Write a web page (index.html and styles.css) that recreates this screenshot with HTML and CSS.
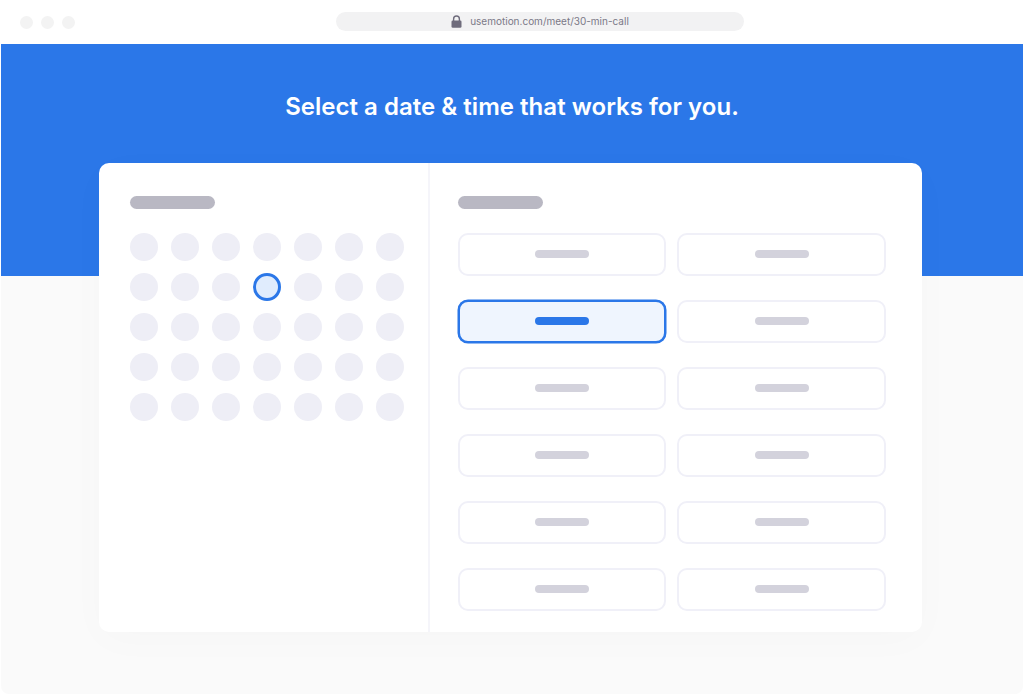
FILE: index.html
```html
<!DOCTYPE html>
<html lang="en">
<head>
<meta charset="utf-8">
<title>Select a date &amp; time</title>
<link rel="stylesheet" href="styles.css">
</head>
<body>
<div class="window">
  <header class="toolbar">
    <div class="lights"><span class="light"></span><span class="light"></span><span class="light"></span></div>
    <div class="address">
      <svg class="lock" width="11" height="13" viewBox="0 0 11 13" aria-hidden="true"><path d="M2.6 6V3.9a2.9 2.9 0 0 1 5.8 0V6" fill="none" stroke="#6f6c7c" stroke-width="1.4"/><rect x="0.5" y="5.4" width="10" height="7.4" rx="1.3" fill="#6f6c7c"/></svg>
      <span class="url">usemotion.com/meet/30-min-call</span>
    </div>
  </header>
  <main class="stage">
    <h1 class="title">Select a date &amp; time that works for you.</h1>
    <section class="card">
      <div class="calendar">
        <div class="heading-bar"></div>
        <div class="dots">
          <span class="dot"></span><span class="dot"></span><span class="dot"></span><span class="dot"></span><span class="dot"></span><span class="dot"></span><span class="dot"></span>
          <span class="dot"></span><span class="dot"></span><span class="dot"></span><span class="dot dot-active"></span><span class="dot"></span><span class="dot"></span><span class="dot"></span>
          <span class="dot"></span><span class="dot"></span><span class="dot"></span><span class="dot"></span><span class="dot"></span><span class="dot"></span><span class="dot"></span>
          <span class="dot"></span><span class="dot"></span><span class="dot"></span><span class="dot"></span><span class="dot"></span><span class="dot"></span><span class="dot"></span>
          <span class="dot"></span><span class="dot"></span><span class="dot"></span><span class="dot"></span><span class="dot"></span><span class="dot"></span><span class="dot"></span>
        </div>
      </div>
      <div class="times">
        <div class="heading-bar"></div>
        <div class="slots">
          <div class="slot"><span class="slot-bar"></span></div><div class="slot"><span class="slot-bar"></span></div>
          <div class="slot slot-active"><span class="slot-bar"></span></div><div class="slot"><span class="slot-bar"></span></div>
          <div class="slot"><span class="slot-bar"></span></div><div class="slot"><span class="slot-bar"></span></div>
          <div class="slot"><span class="slot-bar"></span></div><div class="slot"><span class="slot-bar"></span></div>
          <div class="slot"><span class="slot-bar"></span></div><div class="slot"><span class="slot-bar"></span></div>
          <div class="slot"><span class="slot-bar"></span></div><div class="slot"><span class="slot-bar"></span></div>
        </div>
      </div>
    </section>
  </main>
</div>
</body>
</html>
```
FILE: styles.css
```css
* { box-sizing: border-box; }
html, body { margin: 0; height: 100%; background: #fff; }
body { font-family: Inter, "Liberation Sans", sans-serif; overflow: hidden; }
.window { margin: 0 1px; height: 694px; display: flex; flex-direction: column; border-radius: 0 0 8px 8px; overflow: hidden; }
.toolbar { height: 44px; flex: none; display: flex; align-items: flex-start; padding: 12px 0 0 19px; background: #fff; }
.lights { display: flex; gap: 8px; padding-top: 4px; width: 316px; flex: none; }
.light { width: 13px; height: 13px; border-radius: 50%; background: #f3f3f3; }
.address { width: 408px; height: 19px; border-radius: 10px; background: #f2f2f3; display: flex; align-items: center; justify-content: center; gap: 8px; }
.lock { flex: none; }
.url { font-size: 10px; line-height: 19px; color: #7b7987; }
.stage { flex: 1; display: flex; flex-direction: column; align-items: center; background: linear-gradient(#2b77e8 0, #2b77e8 232px, #fafafa 232px); }
.title { margin: 46px 0 0; height: 33px; font-size: 24px; line-height: 33px; font-weight: 600; color: #fff; text-align: center; letter-spacing: 0.025px; }
.card { margin: 40px 3px 0 0; width: 823px; height: 469px; background: #fff; border-radius: 10px; display: flex; box-shadow: 0 8px 40px rgba(40, 40, 60, 0.02); }
.calendar { width: 331px; flex: none; padding: 33px 0 0 31px; border-right: 2px solid #f5f5fa; }
.times { flex: 1; padding: 33px 0 0 28px; }
.heading-bar { width: 85px; height: 13px; border-radius: 7px; background: #b9b8c3; }
.dots { margin-top: 24px; display: grid; grid-template-columns: repeat(7, 28px); grid-auto-rows: 28px; column-gap: 13px; row-gap: 12px; }
.dot { border-radius: 50%; background: #eeeef6; }
.dot-active { background: #e0ecfd; border: 3px solid #2b77e8; }
.slots { margin-top: 24px; display: grid; grid-template-columns: 208px 209px; grid-auto-rows: 43px; column-gap: 11px; row-gap: 24px; }
.slot { border: 2px solid #f0f0f8; border-radius: 10px; background: #fff; display: flex; align-items: center; justify-content: center; padding-bottom: 1px; }
.slot-bar { width: 54px; height: 8px; border-radius: 4px; background: #d3d2dc; }
.slot-active { border-color: #2b77e8; background: #eff5fe; box-shadow: 0 0 0 0.5px #2b77e8; }
.slot-active .slot-bar { background: #2b77e8; }
```
